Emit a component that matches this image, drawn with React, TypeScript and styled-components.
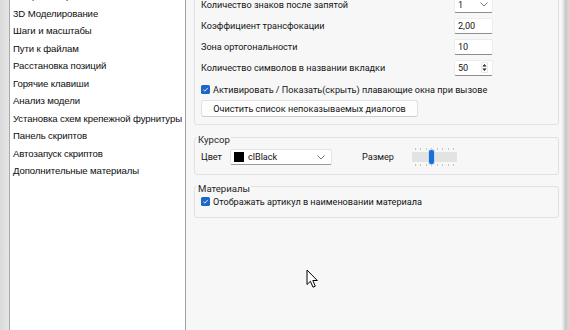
import React from "react";
import styled, { createGlobalStyle } from "styled-components";

const GlobalStyle = createGlobalStyle`
  html, body {
    margin: 0;
    padding: 0;
    background: #f7f7f7;
    overflow: hidden;
  }
  body {
    font-family: Roboto, "Noto Sans", "Liberation Sans", sans-serif;
    color: #141414;
  }
`;

const navItems = [
  "Общие настройки",
  "3D Моделирование",
  "Шаги и масштабы",
  "Пути к файлам",
  "Расстановка позиций",
  "Горячие клавиши",
  "Анализ модели",
  "Установка схем крепежной фурнитуры",
  "Панель скриптов",
  "Автозапуск скриптов",
  "Дополнительные материалы",
];

const fields = [
  { label: "Количество знаков после запятой", value: "1", kind: "combo" },
  { label: "Коэффициент трансфокации", value: "2,00", kind: "edit" },
  { label: "Зона ортогональности", value: "10", kind: "edit" },
  { label: "Количество символов в названии вкладки", value: "50", kind: "spin" },
];

function App() {
  return (
    <>
      <GlobalStyle />
      <Window>
        <EdgeStrip />
        <Sidebar>
          <NavList>
            {navItems.map((item) => (
              <NavItem key={item}>{item}</NavItem>
            ))}
          </NavList>
        </Sidebar>

        <Panel>
          <TopGroup>
            {fields.map((f) => (
              <FieldRow key={f.label}>
                <FieldLabel>{f.label}</FieldLabel>
                <InputBox>
                  <span>{f.value}</span>
                  {f.kind === "combo" && <Chevron />}
                  {f.kind === "spin" && <SpinIcon />}
                </InputBox>
              </FieldRow>
            ))}
            <CheckRow>
              <CheckBox />
              <span>Активировать / Показать(скрыть) плавающие окна при вызове</span>
            </CheckRow>
            <PlainButton>Очистить список непоказываемых диалогов</PlainButton>
          </TopGroup>

          <Group $top={5} $bottom={5}>
            <Legend>Курсор</Legend>
            <InlineRow>
              <RowLabel $width={29}>Цвет</RowLabel>
              <ColorCombo>
                <Swatch />
                <span>clBlack</span>
                <Chevron />
              </ColorCombo>
              <RowLabel $width={50} $gap={30}>
                Размер
              </RowLabel>
              <Slider>
                <Ticks>
                  {Array.from({ length: 8 }).map((_, i) => (
                    <i key={i} />
                  ))}
                </Ticks>
                <Track>
                  <Thumb />
                </Track>
                <Ticks>
                  {Array.from({ length: 8 }).map((_, i) => (
                    <i key={i} />
                  ))}
                </Ticks>
              </Slider>
            </InlineRow>
          </Group>

          <Group $top={4} $bottom={7}>
            <Legend>Материалы</Legend>
            <CheckRow $flush>
              <CheckBox />
              <span>Отображать артикул в наименовании материала</span>
            </CheckRow>
          </Group>

          <Pointer />
        </Panel>
        <RightStrip />
      </Window>
    </>
  );
}

function Chevron() {
  return (
    <ChevronSvg width="8" height="5" viewBox="0 0 8 5">
      <path d="M0.5 0.5 L4 4 L7.5 0.5" fill="none" stroke="#6b6b6b" strokeWidth="0.9" />
    </ChevronSvg>
  );
}

function SpinIcon() {
  return (
    <SpinSvg width="7" height="11" viewBox="0 0 7 11">
      <rect x="0.3" y="0.3" width="6.4" height="10.4" rx="1.5" fill="#fff" stroke="#cfcfcf" strokeWidth="0.6" />
      <path d="M1.4 4.6 L3.5 1.9 L5.6 4.6 Z" fill="#222" />
      <path d="M1.4 6.4 L3.5 9.1 L5.6 6.4 Z" fill="#222" />
    </SpinSvg>
  );
}

function CheckBox() {
  return (
    <CheckSvg width="9" height="9" viewBox="0 0 9 9">
      <rect x="0" y="0" width="9" height="9" rx="1.6" fill="#1a67c9" />
      <path d="M2.3 4.7 L3.8 6.1 L6.8 2.9" fill="none" stroke="#fff" strokeWidth="0.9" />
    </CheckSvg>
  );
}

function Pointer() {
  return (
    <PointerSvg width="13" height="20" viewBox="0 0 13 20">
      <path
        d="M1 1 L1 15.5 L4.4 12.3 L7 18.2 L9.3 17.2 L6.8 11.5 L11.3 11.5 Z"
        fill="#fff"
        stroke="#000"
        strokeWidth="1"
        strokeLinejoin="miter"
      />
    </PointerSvg>
  );
}

const Window = styled.div`
  display: flex;
  width: 569px;
  height: 330px;
  overflow: hidden;
`;

const EdgeStrip = styled.div`
  width: 9px;
  background: linear-gradient(90deg, #d9d9d9, #e6e6e6);
  border-right: 1px solid #a9a9a9;
`;

const Sidebar = styled.div`
  width: 175px;
  background: #ffffff;
  border-right: 1px solid #a0a0a0;
  box-shadow: 1px 0 0 #cfcfcf;
  overflow: hidden;
`;

const NavList = styled.ul`
  list-style: none;
  margin: -13px 0 0;
  padding: 0 0 0 3px;
  font-family: "Liberation Sans", Arial, sans-serif;
  font-size: 9.6px;
  letter-spacing: -0.1px;
  color: #0d0d0d;
`;

const NavItem = styled.li`
  height: 17.5px;
  line-height: 17.5px;
  white-space: nowrap;
`;

const Panel = styled.div`
  position: relative;
  flex: 1;
  display: flex;
  flex-direction: column;
  padding: 0 3px 0 8px;
  font-size: 9.1px;
  background: #f7f7f7;
`;

const TopGroup = styled.div`
  margin-top: -12px;
  padding: 5px 6px 7px 6px;
  border: 1px solid #e1e1e1;
  border-radius: 3px;
`;

const FieldRow = styled.div`
  display: grid;
  grid-template-columns: 253px 39px;
  align-items: center;
  height: 21px;
`;

const FieldLabel = styled.span`
  white-space: nowrap;
`;

const InputBox = styled.div`
  display: flex;
  align-items: center;
  justify-content: space-between;
  height: 16px;
  box-sizing: border-box;
  padding: 0 4px 0 3px;
  background: #fff;
  border: 1px solid #ececec;
  border-bottom-color: #8d8d8d;
  border-radius: 2px;
`;

const ChevronSvg = styled.svg`
  display: block;
  flex-shrink: 0;
`;

const SpinSvg = styled.svg`
  display: block;
`;

const CheckRow = styled.div<{ $flush?: boolean }>`
  display: flex;
  align-items: center;
  gap: 3px;
  height: 17px;
  margin-top: ${(p) => (p.$flush ? 0 : 3)}px;
  white-space: nowrap;
`;

const CheckSvg = styled.svg`
  display: block;
  flex-shrink: 0;
`;

const PlainButton = styled.button`
  display: block;
  margin-top: 2px;
  width: 217px;
  height: 17px;
  padding: 0;
  font: inherit;
  color: #141414;
  background: #fdfdfd;
  border: 1px solid #e2e2e2;
  border-bottom-color: #cdcdcd;
  border-radius: 3px;
`;

const Group = styled.fieldset<{ $top: number; $bottom: number }>`
  margin: ${(p) => p.$top}px 0 0;
  padding: 0 6px ${(p) => p.$bottom}px 6px;
  min-width: 0;
  border: 1px solid #e1e1e1;
  border-radius: 3px;
`;

const Legend = styled.legend`
  margin-left: -4px;
  padding: 6px 1px 0;
  line-height: 8px;
  font-size: 9.6px;
  color: #262626;
`;

const InlineRow = styled.div`
  display: flex;
  align-items: center;
  height: 16px;
  margin-top: 5px;
  margin-bottom: 4px;
`;

const RowLabel = styled.span<{ $width: number; $gap?: number }>`
  flex: 0 0 ${(p) => p.$width}px;
  margin-left: ${(p) => p.$gap ?? 0}px;
  white-space: nowrap;
`;

const ColorCombo = styled.div`
  display: flex;
  align-items: center;
  gap: 4px;
  width: 102px;
  height: 16px;
  box-sizing: border-box;
  padding: 0 6px 0 3px;
  background: #fff;
  border: 1px solid #e4e4e4;
  border-bottom-color: #9a9a9a;
  border-radius: 2px;

  svg {
    margin-left: auto;
  }
`;

const Swatch = styled.div`
  width: 10px;
  height: 10px;
  background: #000;
`;

const Slider = styled.div`
  display: flex;
  flex-direction: column;
  gap: 2px;
  width: 45px;
`;

const Ticks = styled.div`
  display: flex;
  justify-content: space-between;
  padding: 0 3px;
  height: 2px;

  i {
    display: block;
    width: 1px;
    height: 2px;
    background: #c9c2b8;
  }
`;

const Track = styled.div`
  display: flex;
  align-items: center;
  height: 10px;
  background: #e3e3e3;
  border-radius: 1px;
  padding-left: 17px;
`;

const Thumb = styled.div`
  width: 5px;
  height: 14px;
  margin: -2px 0;
  background: #1b6fd3;
  border-radius: 2px;
  box-shadow: 0 0 0 1px #c7dbf3;
`;

const PointerSvg = styled.svg`
  position: absolute;
  left: 120px;
  top: 269px;
  display: block;
`;

const RightStrip = styled.div`
  width: 6px;
  border-left: 1px solid #ececec;
  background: linear-gradient(90deg, #e9e9e9, #c9c9c9 40%, #d9d9d9);
`;

export default App;
